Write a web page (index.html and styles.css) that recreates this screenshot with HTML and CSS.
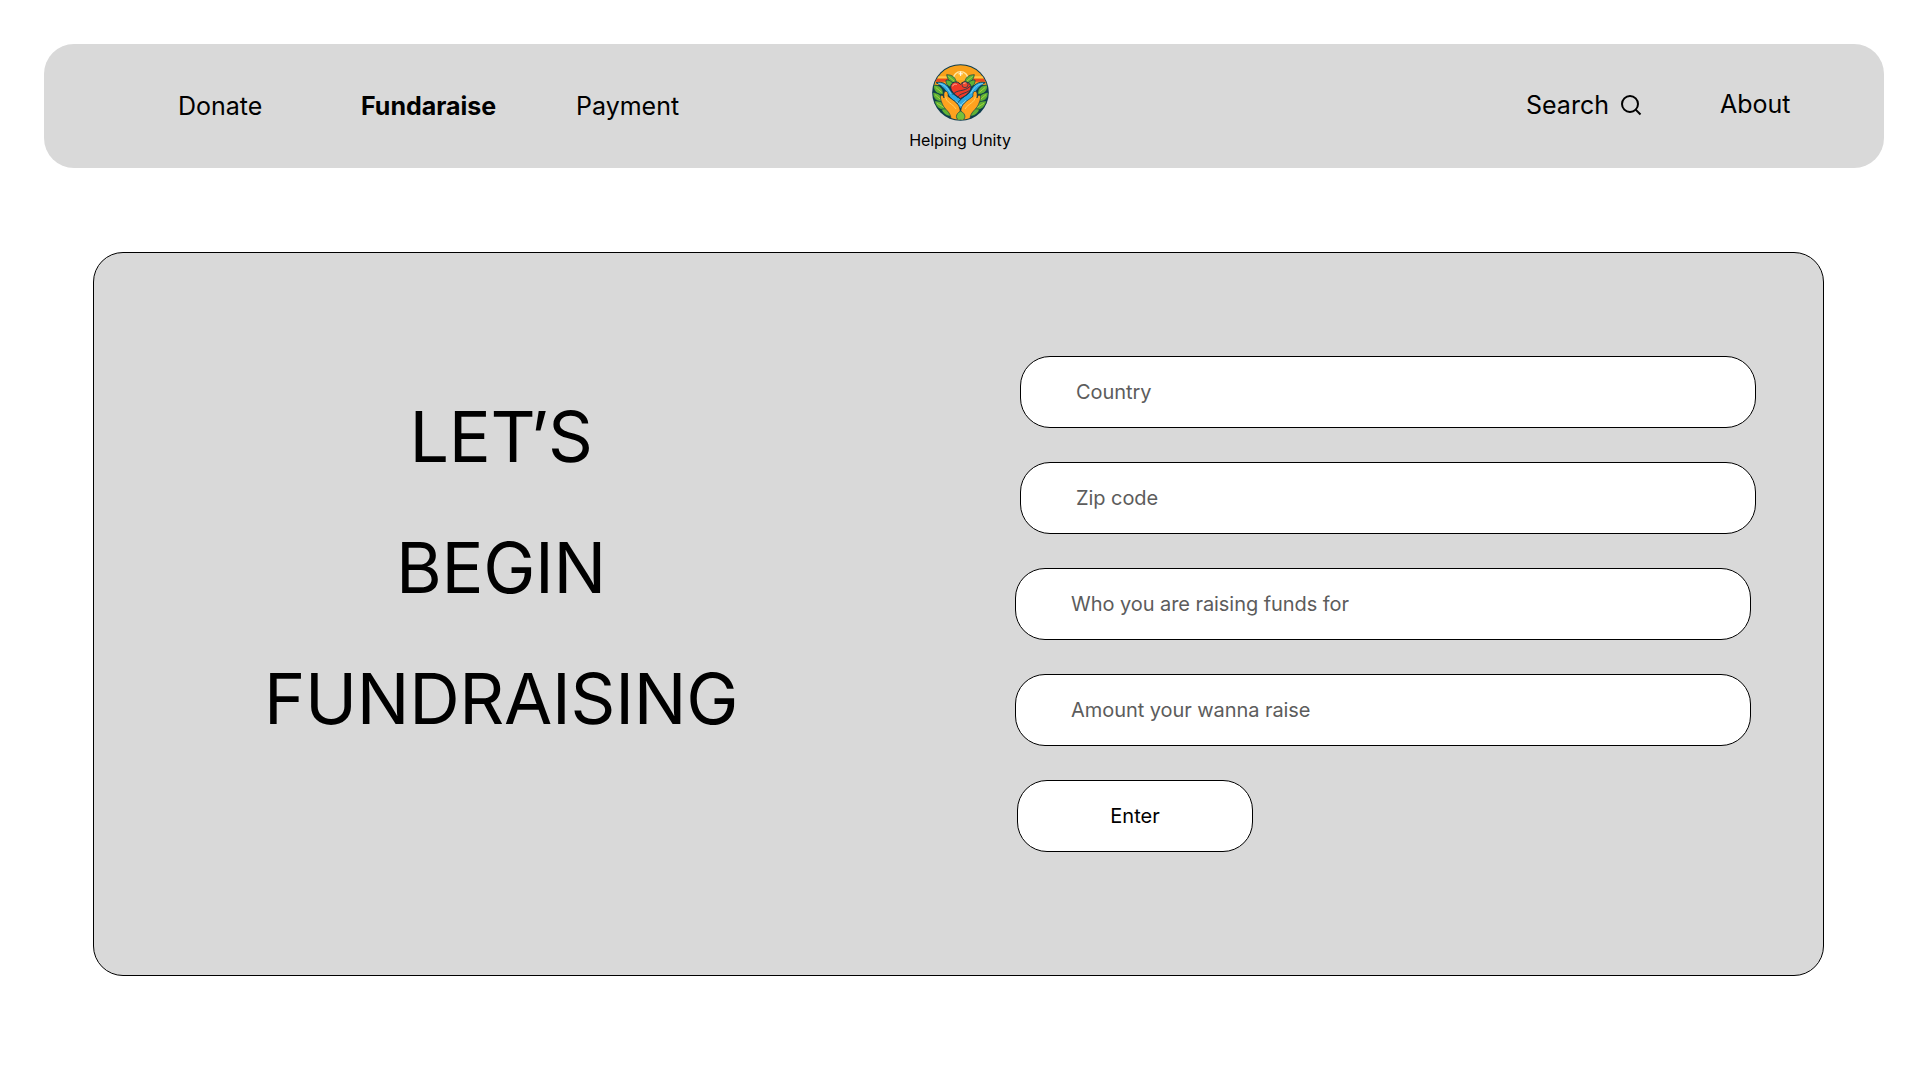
FILE: index.html
```html
<!DOCTYPE html>
<html lang="en">
<head>
<meta charset="utf-8">
<title>Helping Unity</title>
<link rel="stylesheet" href="styles.css">
</head>
<body>
<header class="topbar">
  <nav class="menu">
    <a class="menu-link donate">Donate</a>
    <a class="menu-link fundraise">Fundaraise</a>
    <a class="menu-link">Payment</a>
  </nav>
  <div class="brand">
    <svg class="brand-logo" viewBox="36 29 171 171">
      <defs><clipPath id="disc"><circle cx="121.5" cy="114.5" r="82"/></clipPath></defs>
      <circle cx="121.5" cy="114.5" r="85" fill="#0d3d4d"/>
      <g clip-path="url(#disc)">
        <rect x="36" y="29" width="171" height="63" fill="#f9a11b"/>
        <path d="M36 66h54v6H36zM153 66h54v6h-54z" fill="#ffc54a"/>
        <path d="M36 73h50v9H36zM157 73h50v9h-50z" fill="#e8471f"/>
        <path d="M96 78a26 26 0 0 1 52 0z" fill="#ffb52c"/>
        <path d="M100 74a22 22 0 0 1 44 0" fill="none" stroke="#ffe5a0" stroke-width="4"/>
        <path d="M122 52v13M115.500 58.500h13" stroke="#fff" stroke-width="3"/>
        <g fill="#5fb235" stroke="#0d3d4d" stroke-width="2">
          <path d="M80 61c18 0 28 10 29 25-16 1-27-8-29-25zM163 61c-18 0-28 10-29 25 16 1 27-8 29-25z"/>
          <path d="M78 77c15 0 23 8 24 22-17 1-25-8-24-22zM165 77c-15 0-23 8-24 22 17 1 25-8 24-22z"/>
          <path d="M40 92c20 0 30 10 30 28-18 1-30-9-30-28zM203 92c-20 0-30 10-30 28 18 1 30-9 30-28z"/>
          <path d="M37 114c20 1 32 12 33 30-20-1-31-12-33-30zM206 114c-20 1-32 12-33 30 20-1 31-12 33-30z"/>
          <path d="M43 140c20-2 35 7 39 27-20 2-35-7-39-27zM200 140c-20-2-35 7-39 27 20 2 35-7 39-27z"/>
          <path d="M64 165c18-5 34 1 41 18-17 7-34 0-41-18zM179 165c-18-5-34 1-41 18 17 7 34 0 41-18z"/>
        </g>
        <g fill="none" stroke="#b7d943" stroke-width="2.500">
          <path d="M85 66l18 15M158 66l-18 15M47 99l18 15M196 99l-18 15M45 121l19 16M198 121l-19 16M51 147l24 14M192 147l-24 14"/>
        </g>
        <g fill="#2da8e0" stroke="#0d3d4d" stroke-width="2.500">
          <path d="M48 85c21-5 34 5 44 24 7 13 21 17 31 27l15 14-13 13c-5-16-20-20-30-29-15-13-17-35-47-49z"/>
          <path d="M196 85c-21-5-34 5-44 24-7 13-19 16-28 25-9 8-16 17-8 24l9 6c5-16 16-20 26-29 15-13 16-36 45-50z"/>
        </g>
        <path d="M55 88c17 1 27 12 37 30M189 88c-17 1-27 12-37 30M106 140l20 15M138 138l-18 16" fill="none" stroke="#8fdcf3" stroke-width="2.500"/>
        <path d="M121 90c-9-13-30-7-29 9 1 15 17 25 29 34 15-8 32-19 32-34 0-16-22-22-32-9z" fill="#f03a27" stroke="#0d3d4d" stroke-width="3"/>
        <circle cx="135" cy="91" r="9" fill="#f04b31" stroke="#0d3d4d" stroke-width="2"/>
        <path d="M98 121c12-17 35-7 52-25M112 130c8-14 24-12 37-22" fill="none" stroke="#0d3d4d" stroke-width="2.500"/>
        <path d="M98 95c2-5 6-7 11-5M131 87l5-1" fill="none" stroke="#ffb09a" stroke-width="3" stroke-linecap="round"/>
        <g fill="#ffa21f" stroke="#0d3d4d" stroke-width="2" stroke-linejoin="round">
          <path d="M78 111c5 0 7 7 6 15 12 10 30 19 35 35 3 10 2 26 0 38l-26-4c0-22-19-29-25-44-6-13-9-25-4-28 4-2 7 4 8 8-1-11-1-20 6-20z"/>
          <path d="M165 111c-5 0-7 7-6 15-12 10-30 19-35 35-3 10-2 26 0 38l26-4c0-22 19-29 25-44 6-13 9-25 4-28-4-2-7 4-8 8 1-11 1-20-6-20z"/>
        </g>
        <path d="M77 127c1 18 22 21 31 37M166 127c-1 18-22 21-31 37" fill="none" stroke="#ffd061" stroke-width="3"/>
        <path d="M122 170c16 9 18 23 0 32-18-9-16-23 0-32z" fill="#76c03a" stroke="#0d3d4d" stroke-width="2"/>
      </g>
    </svg>
    <span class="brand-name">Helping Unity</span>
  </div>
  <div class="tools">
    <a class="search">Search
      <svg class="search-icon" viewBox="0 0 24 24"><circle cx="11" cy="11" r="8"/><path d="M21.500 21.500l-4.850-4.850"/></svg>
    </a>
    <a class="about">About</a>
  </div>
</header>
<main class="panel">
  <h1 class="headline">LE<span class="kern-t">T</span><span class="kern-quote">’</span>S<br>BEGIN<br>FUNDRAISING</h1>
  <form class="form">
    <label class="field field-wide">Country</label>
    <label class="field field-wide">Zip code</label>
    <label class="field">Who you are raising funds for</label>
    <label class="field">Amount your wanna raise</label>
    <button class="enter" type="button">Enter</button>
  </form>
</main>
</body>
</html>
```
FILE: styles.css
```css
* { box-sizing: border-box; }

body {
  margin: 0;
  padding: 44px 36px 0 44px;
  height: 1080px;
  overflow: hidden;
  background: #fff;
  color: #000;
  font-family: Inter, "Liberation Sans", sans-serif;
}

.topbar {
  display: grid;
  grid-template-columns: 860px 113px 1fr;
  width: 1840px;
  height: 124px;
  border-radius: 30px;
  background: #d9d9d9;
  font-size: 25px;
  line-height: 30px;
}

.menu {
  display: flex;
  align-items: center;
  padding-left: 134px;
}

.donate { width: 183px; }
.fundraise { width: 215px; font-weight: 700; }

.brand {
  display: flex;
  flex-direction: column;
  align-items: center;
  padding-top: 20px;
}

.brand-logo { width: 57px; height: 57px; }

.brand-name {
  margin: 10px 1px 0 0;
  font-size: 16px;
  letter-spacing: -0.05px;
  line-height: 19px;
  white-space: nowrap;
}

.tools {
  display: flex;
  align-items: flex-start;
  padding-left: 509px;
}

.search {
  display: flex;
  width: 194px;
  padding-top: 46px;
  gap: 10px;
}

.search-icon {
  width: 24px;
  height: 24px;
  margin-top: 3px;
  fill: none;
  stroke: #000;
  stroke-width: 2;
}

.about { padding-top: 45px; }

.panel {
  display: grid;
  grid-template-columns: 814px 1fr;
  width: 1731px;
  height: 724px;
  margin: 84px 0 0 49px;
  border: 1px solid #000;
  border-radius: 30px;
  background: #d9d9d9;
}

.headline {
  margin: 0;
  padding-top: 118px;
  font-size: 70px;
  font-weight: 400;
  letter-spacing: -0.3px;
  line-height: 131px;
  text-align: center;
}

.kern-t { letter-spacing: -5.5px; }
.kern-quote { letter-spacing: -0.5px; }

.form {
  display: flex;
  flex-direction: column;
  align-items: flex-start;
  gap: 34px;
  padding: 103px 0 0 107px;
}

.field {
  display: flex;
  align-items: center;
  width: 736px;
  height: 72px;
  padding-left: 55px;
  border: 1px solid #000;
  border-radius: 30px;
  background: #fff;
  color: #5c5c5c;
  font-size: 20px;
  letter-spacing: -0.06px;
}

.field-wide { margin-left: 5px; }

.enter {
  width: 236px;
  height: 72px;
  margin-left: 2px;
  padding: 0;
  border: 1px solid #000;
  border-radius: 30px;
  background: #fff;
  color: #000;
  font: 400 20px Inter, "Liberation Sans", sans-serif;
}
```
